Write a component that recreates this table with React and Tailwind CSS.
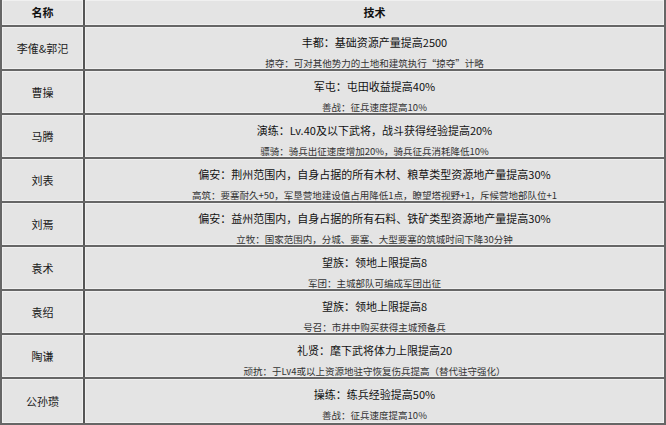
import React from "react";

const rows = [
  ["李傕&郭汜", "丰都：基础资源产量提高2500", "掠夺：可对其他势力的土地和建筑执行“掠夺”计略"],
  ["曹操", "军屯：屯田收益提高40%", "善战：征兵速度提高10%"],
  ["马腾", "演练：Lv.40及以下武将，战斗获得经验提高20%", "骠骑：骑兵出征速度增加20%，骑兵征兵消耗降低10%"],
  ["刘表", "偏安：荆州范围内，自身占据的所有木材、粮草类型资源地产量提高30%", "高筑：要塞耐久+50，军垦营地建设值占用降低1点，瞭望塔视野+1，斥候营地部队位+1"],
  ["刘焉", "偏安：益州范围内，自身占据的所有石料、铁矿类型资源地产量提高30%", "立牧：国家范围内，分城、要塞、大型要塞的筑城时间下降30分钟"],
  ["袁术", "望族：领地上限提高8", "军团：主城部队可编成军团出征"],
  ["袁绍", "望族：领地上限提高8", "号召：市井中购买获得主城预备兵"],
  ["陶谦", "礼贤：麾下武将体力上限提高20", "顽抗：于Lv4或以上资源地驻守恢复伤兵提高（替代驻守强化）"],
  ["公孙瓒", "操练：练兵经验提高50%", "善战：征兵速度提高10%"],
];

export default function App() {
  return (
    <div className="w-[666px] h-[425px] bg-[#e4e4e4] border-l-2 border-r-2 border-b-2 border-[#666] font-['Noto_Sans_CJK_SC',sans-serif] text-[#1e1e1e] overflow-hidden">
      <div className="flex h-[27px] border-b-2 border-[#666]">
        <div className="w-[83px] shrink-0 border-r-2 border-[#555] flex items-center justify-center text-[11px] font-bold leading-none text-[#111] shadow-[inset_0_0_0_1px_#f0f0f0]">
          名称
        </div>
        <div className="flex-1 flex items-center justify-center text-[11px] font-bold leading-none text-[#111] shadow-[inset_0_0_0_1px_#f0f0f0]">
          技术
        </div>
      </div>
      {rows.map(([name, main, sub], i) => (
        <div
          key={i}
          className={
            i === rows.length - 1
              ? "flex h-[44px]"
              : "flex h-[44px] border-b-2 border-[#666]"
          }
        >
          <div className="w-[83px] shrink-0 border-r-2 border-[#555] flex items-center justify-center text-[11px] leading-none text-[#1a1a1a] shadow-[inset_0_0_0_1px_#f0f0f0]">
            {name}
          </div>
          <div className="flex-1 flex flex-col items-center shadow-[inset_0_0_0_1px_#f0f0f0]">
            <div className="pt-[5px] leading-[20px] text-[11px] text-[#111] whitespace-nowrap">{main}</div>
            <div className="mt-[5px] leading-[12px] text-[9.5px] text-[#333] whitespace-nowrap">{sub}</div>
          </div>
        </div>
      ))}
    </div>
  );
}
